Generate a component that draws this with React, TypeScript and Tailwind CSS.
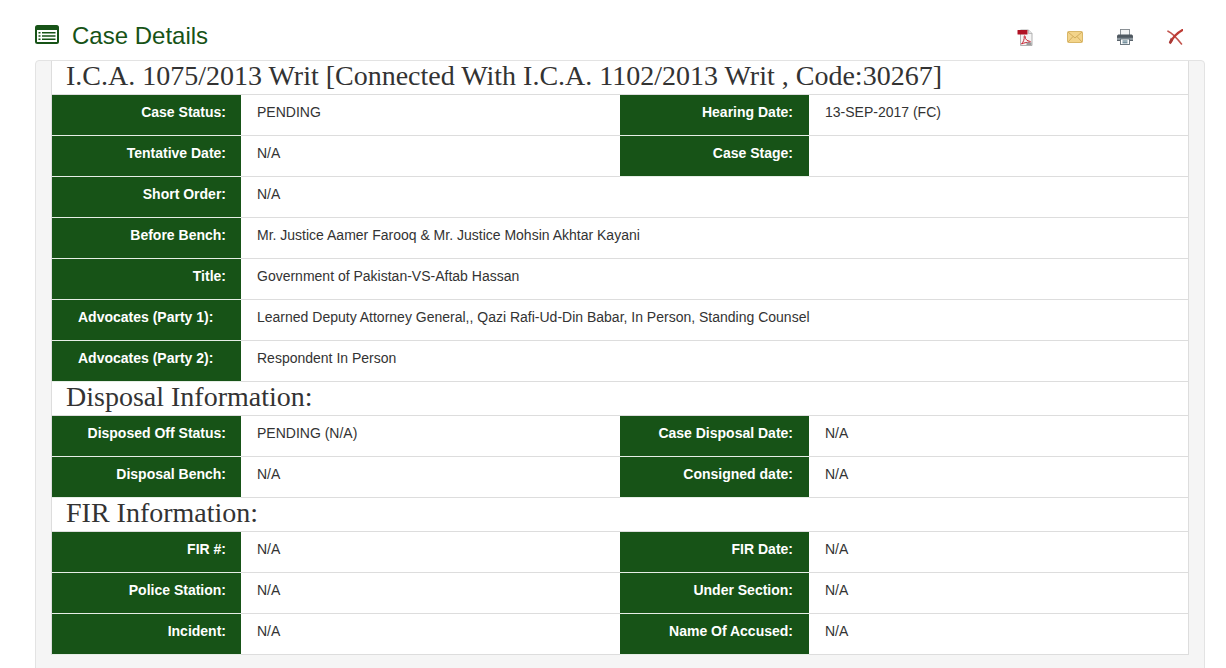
const labelBase =
  "flex w-[189px] shrink-0 justify-end border-b border-[#e6eee6] bg-[#175317] pt-[7px] text-[14px] leading-[20px] font-bold text-white";
const valueClass =
  "min-w-0 flex-1 border-b border-[#dddddd] pl-[16px] pt-[7px] text-[14px] leading-[20px] text-[#333333]";

function Row({ cells }: { cells: [string, string][] }) {
  return (
    <div className="flex h-[41px]">
      {cells.map(([label, value], i) => (
        <div key={label} className="flex min-w-0 flex-1">
          <div className={`${labelBase} ${i === 1 ? "pr-[16px]" : "pr-[15px]"}`}>
            <span className={label.startsWith("Advocates") ? "w-full pl-[26px] text-left" : ""}>{label}</span>
          </div>
          <div className={valueClass}>{value}</div>
        </div>
      ))}
    </div>
  );
}

function Heading({ children }: { children: string }) {
  return (
    <div className="h-[34px] border-b border-[#dddddd] pl-[14px] font-['Liberation_Serif',serif] text-[28px] leading-[29px] text-[#333333]">
      {children}
    </div>
  );
}

function ListIcon() {
  return (
    <svg width="24" height="19" viewBox="0 0 24 19">
      <rect x="0" y="0" width="24" height="19" rx="2.500" fill="#175317" />
      <rect x="2" y="5" width="20" height="12" fill="#ffffff" />
      <path d="M3.500 7h2v1.500h-2zM3.500 10.200h2v1.500h-2zM3.500 13.400h2v1.500h-2zM7 7h13.500v1.500H7zM7 10.200h13.500v1.500H7zM7 13.400h13.500v1.500H7z" fill="#175317" />
    </svg>
  );
}

function PdfIcon() {
  return (
    <svg width="16" height="17" viewBox="0 0 16 17">
      <path d="M3.500 1h8l3.500 3.500V16.500H3.500z" fill="#f4f4f4" stroke="#a8a8a8" strokeWidth="0.9" />
      <path d="M11.500 1v3.500H15" fill="#e0e0e0" stroke="#a8a8a8" strokeWidth="0.7" />
      <rect x="0.500" y="1" width="10" height="4.500" rx="0.500" fill="#b01224" />
      <path d="M4.500 15c2-2 3-5 2.700-7.500C7 6.500 8.300 6.500 8.200 8c-.2 2 2 4 4.500 4.300 1.200.2 1 1.200-.2 1-2-.2-5 .3-8 1.700z" fill="none" stroke="#c8202f" strokeWidth="1" />
      <rect x="9.500" y="13.500" width="5" height="2.500" fill="#9a9a9a" />
    </svg>
  );
}

function MailIcon() {
  return (
    <svg width="16" height="12" viewBox="0 0 16 12">
      <rect x="0.500" y="0.500" width="15" height="11" rx="1" fill="#f3d48a" stroke="#d9b768" />
      <path d="M1 1l7 6 7-6M1 11l5-5.500M15 11l-5-5.500" fill="none" stroke="#c9a250" strokeWidth="0.800" />
    </svg>
  );
}

function PrintIcon() {
  return (
    <svg width="16" height="16" viewBox="0 0 16 16">
      <rect x="3.500" y="0.500" width="9" height="6" fill="#f3f3f3" stroke="#7f868c" strokeWidth="0.900" />
      <path d="M2 5.500h12c1 0 2 .7 2 1.700v4.800H0V7.200C0 6.200 1 5.500 2 5.500z" fill="#4f5860" />
      <rect x="0" y="8.800" width="16" height="2.400" fill="#8d979e" />
      <rect x="3.500" y="10" width="9" height="5.500" fill="#ffffff" stroke="#5d6a73" strokeWidth="0.900" />
      <path d="M5.500 12h5M5.500 13.800h5" stroke="#3f6678" strokeWidth="1" />
    </svg>
  );
}

function CloseIcon() {
  return (
    <svg width="16" height="16" viewBox="0 0 16 16">
      <path d="M1 2.200C4 3.500 9 8 14.500 15" fill="none" stroke="#c2544d" strokeWidth="1.600" strokeLinecap="round" />
      <path d="M15.500 1C11 3.500 6 8 3.500 13.500" fill="none" stroke="#bd3b34" strokeWidth="2.200" strokeLinecap="round" />
      <path d="M4 8.500L1.800 13.500l1.500 1.800 2.700-4z" fill="#a93a37" />
    </svg>
  );
}

export default function App() {
  return (
    <div className="h-[668px] overflow-hidden bg-white font-['Liberation_Sans',sans-serif]">
      <div className="flex h-[60px] pl-[35px] pr-[43px]">
        <div className="mt-[25px]">
          <ListIcon />
        </div>
        <h1 className="ml-[13px] mt-[21px] text-[24px] leading-[30px] text-[#175317]">Case Details</h1>
        <div className="ml-auto mt-[29px] flex h-[16px] items-center gap-[34px]">
          <PdfIcon />
          <MailIcon />
          <PrintIcon />
          <CloseIcon />
        </div>
      </div>
      <div className="ml-[35px] mr-[21px] h-[620px] rounded-t-[4px] border border-[#e3e3e3] bg-[#f5f5f5] px-[15px]">
        <div className="border-x border-[#dddddd] bg-white">
          <Heading>I.C.A. 1075/2013 Writ [Connected With I.C.A. 1102/2013 Writ , Code:30267]</Heading>
          <Row cells={[["Case Status:", "PENDING"], ["Hearing Date:", "13-SEP-2017 (FC)"]]} />
          <Row cells={[["Tentative Date:", "N/A"], ["Case Stage:", ""]]} />
          <Row cells={[["Short Order:", "N/A"]]} />
          <Row cells={[["Before Bench:", "Mr. Justice Aamer Farooq & Mr. Justice Mohsin Akhtar Kayani"]]} />
          <Row cells={[["Title:", "Government of Pakistan-VS-Aftab Hassan"]]} />
          <Row cells={[["Advocates (Party 1):", "Learned Deputy Attorney General,, Qazi Rafi-Ud-Din Babar, In Person, Standing Counsel"]]} />
          <Row cells={[["Advocates (Party 2):", "Respondent In Person"]]} />
          <Heading>Disposal Information:</Heading>
          <Row cells={[["Disposed Off Status:", "PENDING (N/A)"], ["Case Disposal Date:", "N/A"]]} />
          <Row cells={[["Disposal Bench:", "N/A"], ["Consigned date:", "N/A"]]} />
          <Heading>FIR Information:</Heading>
          <Row cells={[["FIR #:", "N/A"], ["FIR Date:", "N/A"]]} />
          <Row cells={[["Police Station:", "N/A"], ["Under Section:", "N/A"]]} />
          <Row cells={[["Incident:", "N/A"], ["Name Of Accused:", "N/A"]]} />
        </div>
      </div>
    </div>
  );
}
